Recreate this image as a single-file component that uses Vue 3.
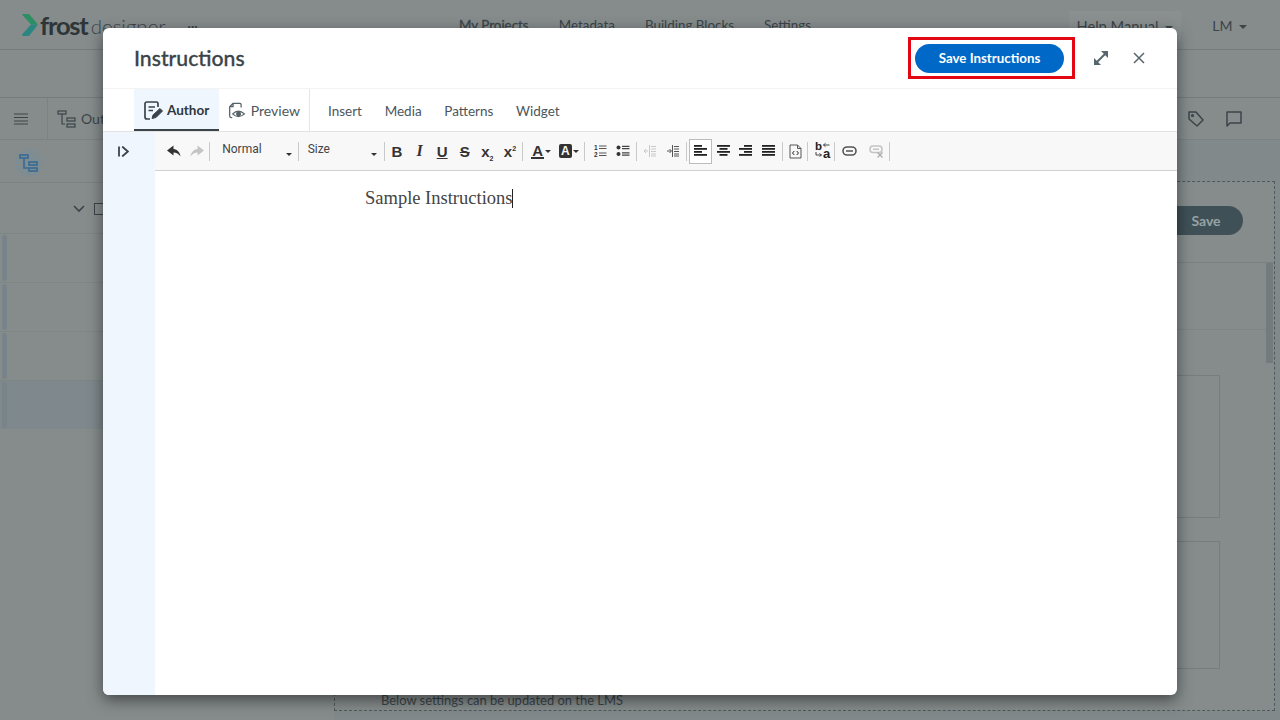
<template>
  <div class="page">
    <!-- page behind the dialog, painted at its dimmed colours -->
    <header class="top-bar">
      <div class="logo">
        <svg width="18" height="24" viewBox="0 0 18 24">
          <path d="M1 1.5Q1 1 1.5 1L8 1L17 11.5L10 11.5Z" fill="#2c8f63" />
          <path d="M10 11.5L17 11.5L8 23L2.5 23Q0.5 23 1.5 21Z" fill="#2b8580" />
        </svg>
        <span class="logo-strong">frost</span>
        <span class="logo-light">designer</span>
        <span class="logo-dots">...</span>
      </div>
      <nav class="top-nav">
        <span class="active">My Projects</span>
        <span>Metadata</span>
        <span>Building Blocks</span>
        <span>Settings</span>
      </nav>
      <div class="top-right">
        <span class="help">Help Manual <i class="caret"></i></span>
        <span class="user">LM <i class="caret"></i></span>
      </div>
    </header>
    <div class="sub-bar"></div>
    <div class="tool-bar">
      <div class="menu-cell">
        <svg width="16" height="12" viewBox="0 0 16 12"><path d="M1 1H15M1 4.5H15M1 8H15M1 11H15" stroke="#3b4449" stroke-width="1.2" /></svg>
      </div>
      <div class="outline-cell">
        <svg width="20" height="20" viewBox="0 0 20 20" fill="none" stroke="#3b4449" stroke-width="1.2">
          <rect x="1" y="2" width="8" height="3" /><path d="M5 5V15H8" /><rect x="10" y="9" width="8" height="3" /><rect x="10" y="15" width="8" height="3" />
        </svg>
        <span>Outline</span>
      </div>
      <div class="tool-right">
        <svg width="20" height="20" viewBox="0 0 20 20" fill="none" stroke="#3b4449" stroke-width="1.5">
          <path d="M3 3H10L17 11L11 17L3 10Z" stroke-linejoin="round" /><circle cx="6.5" cy="6.5" r=".8" />
        </svg>
        <svg width="18" height="18" viewBox="0 0 18 18" fill="none" stroke="#3b4449" stroke-width="1.5">
          <path d="M2 2H16V13H5L2 16Z" stroke-linejoin="round" />
        </svg>
      </div>
    </div>
    <div class="workspace">
      <aside class="left-panel">
        <div class="panel-tabs">
          <span class="tree-btn">
            <svg width="20" height="20" viewBox="0 0 20 20" fill="none" stroke="#3a6c94" stroke-width="1.7">
              <rect x="1" y="2" width="8" height="3" /><path d="M5 5V15H9" /><rect x="10" y="9" width="8" height="3" /><rect x="10" y="15" width="8" height="3" />
            </svg>
          </span>
        </div>
        <div class="tree-head">
          <svg width="12" height="8" viewBox="0 0 12 8" fill="none" stroke="#3b4449" stroke-width="1.6"><path d="M1 1L6 6L11 1" /></svg>
          <span class="tree-box"></span>
        </div>
        <div class="tree-row" v-for="n in 4" :key="n" :class="{ current: n === 4 }"><span class="handle"></span></div>
      </aside>
      <main class="right-panel">
        <div class="dashed">
          <div class="save-row"><span class="save-pill">Save</span></div>
          <div class="scroll-area">
            <div class="band"></div>
            <div class="content-box first"></div>
            <div class="content-box second"></div>
            <p class="lms-note">Below settings can be updated on the LMS</p>
            <span class="scroll-thumb"></span>
          </div>
        </div>
      </main>
    </div>

    <div class="overlay">
      <section class="modal">
        <div class="modal-head">
          <h1>Instructions</h1>
          <div class="highlight"><button class="save-btn">Save Instructions</button></div>
          <svg class="expand" width="18" height="18" viewBox="0 0 18 18" fill="none" stroke="#56666c" stroke-width="2">
            <path d="M3.5 14.5L14.5 3.5" />
            <path d="M9 2H16V9Z" fill="#56666c" stroke="none" />
            <path d="M2 9V16H9Z" fill="#56666c" stroke="none" />
          </svg>
          <svg class="close" width="12" height="12" viewBox="0 0 12 12" fill="none" stroke="#56666c" stroke-width="1.5"><path d="M1 1L11 11M11 1L1 11" /></svg>
        </div>

        <div class="modal-tabs">
          <div class="mode-tab on">
            <svg width="21" height="21" viewBox="0 0 21 21" fill="none" stroke="#3a4449" stroke-width="1.7">
              <path d="M15 7V3.5Q15 2 13.5 2H4Q2 2 2 4V17Q2 19 4 19H7" />
              <path d="M5.5 7H12M5.5 10.5H10" />
              <path d="M9 18.5L10 15L17 8.5L19.5 11L13 17.5Z" fill="#3a4449" stroke-width="1" />
            </svg>
            <span>Author</span>
          </div>
          <div class="mode-tab">
            <svg width="21" height="21" viewBox="0 0 21 21" fill="none" stroke="#566267" stroke-width="1.5">
              <path d="M6 2H14Q15.5 2 15.5 3.5V7M6 2L2 6V17Q2 19 4 19H5M6 2V6H2" />
              <path d="M5.5 14.5Q12 8 19.5 14.5Q12 21 5.5 14.5Z" />
              <circle cx="12.5" cy="14.5" r="2.2" fill="#566267" />
            </svg>
            <span>Preview</span>
          </div>
          <div class="text-tabs">
            <span>Insert</span>
            <span>Media</span>
            <span>Patterns</span>
            <span>Widget</span>
          </div>
        </div>

        <div class="modal-body">
          <div class="side-strip">
            <svg width="11" height="11" viewBox="0 0 11 11" fill="none" stroke="#3a4449" stroke-width="1.8"><path d="M1 0.5V10.5M4.2 0.5L9.8 5.5L4.2 10.5" /></svg>
          </div>
          <div class="editor">
            <div class="cke-bar">
              <button class="tb"><svg width="16" height="14" viewBox="0 0 16 14"><path d="M7.5 1.5L1 6.5L7.5 11.5V8.5C10.5 8.5 12.5 9.8 14.5 12.5C14 8.5 11.5 5.5 7.5 5Z" fill="#333" /></svg></button>
              <button class="tb"><svg width="16" height="14" viewBox="0 0 16 14"><path d="M8.5 1.5L15 6.5L8.5 11.5V8.5C5.5 8.5 3.5 9.8 1.5 12.5C2 8.5 4.5 5.5 8.5 5Z" fill="#c4c4c4" /></svg></button>
              <i class="sep"></i>
              <div class="combo normal"><span>Normal</span><i class="mini-caret"></i></div>
              <i class="sep"></i>
              <div class="combo size"><span>Size</span><i class="mini-caret"></i></div>
              <i class="sep"></i>
              <button class="tb glyph bold">B</button>
              <button class="tb glyph ital">I</button>
              <button class="tb glyph under">U</button>
              <button class="tb glyph strike">S</button>
              <button class="tb glyph script"><span>x<sub>2</sub></span></button>
              <button class="tb glyph script"><span>x<sup>2</sup></span></button>
              <i class="sep"></i>
              <button class="tb wide glyph color-a"><span>A</span><i class="mini-caret"></i></button>
              <button class="tb wide glyph bg-a"><span>A</span><i class="mini-caret"></i></button>
              <i class="sep after-color"></i>
              <button class="tb">
                <svg width="13" height="14" viewBox="0 0 13 14">
                  <text x="0" y="6" class="tiny">1</text><text x="0" y="13" class="tiny">2</text>
                  <path d="M5 2H12.5M5 4.5H12.5M5 9H12.5M5 11.5H12.5" stroke="#555" stroke-width="1.2" />
                </svg>
              </button>
              <button class="tb">
                <svg width="14" height="14" viewBox="0 0 14 14">
                  <circle cx="2.5" cy="3.5" r="2" fill="#333" /><circle cx="2.5" cy="10" r="2" fill="#333" />
                  <path d="M6 2.3H13.5M6 4.7H13.5M6 8.8H13.5M6 11.2H13.5" stroke="#444" stroke-width="1.2" />
                </svg>
              </button>
              <i class="sep roomy"></i>
              <button class="tb">
                <svg width="14" height="14" viewBox="0 0 14 14" fill="none" stroke="#c9c9c9" stroke-width="1">
                  <path d="M6.5 1V13M8 2.5H13M8 5H13M8 7.5H13M8 10H13M8 12H13M1 7H5M3 5L1 7L3 9" />
                </svg>
              </button>
              <button class="tb">
                <svg width="14" height="14" viewBox="0 0 14 14" fill="none" stroke="#555" stroke-width="1">
                  <path d="M6.5 1V13M8 2.5H13M8 5H13M8 7.5H13M8 10H13M8 12H13M1 7H5M3.5 5L5.5 7L3.5 9" />
                </svg>
              </button>
              <i class="sep roomy"></i>
              <button v-for="a in aligns" :key="a.name" class="tb" :class="{ pressed: a.name === 'left' }">
                <svg width="13" height="12" viewBox="0 0 13 12">
                  <rect v-for="(l, i) in a.lines" :key="i" :x="l[0]" :y="i * 3" :width="l[1]" height="1.8" fill="#222" />
                </svg>
              </button>
              <i class="sep roomy"></i>
              <button class="tb">
                <svg width="13" height="15" viewBox="0 0 13 15" fill="none" stroke="#555" stroke-width="1">
                  <path d="M1 1H8.5L12 4.5V14H1ZM8.5 1V4.5H12" />
                  <path d="M5.3 7L3.500 9L5.3 11M7.7 7L9.5 9L7.7 11" stroke="#222" />
                </svg>
              </button>
              <i class="sep after-source"></i>
              <button class="tb">
                <svg class="bidi-icon" width="16" height="20" viewBox="0 0 16 20">
                  <text x="0" y="9" class="bidi">b</text>
                  <text x="8" y="17" class="bidi big">a</text>
                  <path d="M8.5 4H14.5M8.5 4L10.5 2.300M8.5 4L10.500 5.700M1 11V14H6.500M6.500 14L4.500 12.500M6.500 14L4.500 15.500" fill="none" stroke="#444" stroke-width="1" />
                </svg>
              </button>
              <i class="sep"></i>
              <button class="tb link-btn">
                <svg width="15" height="10" viewBox="0 0 15 10" fill="none" stroke="#555" stroke-width="1.6">
                  <rect x="1" y="1" width="13" height="8" rx="4" /><path d="M4 5H11" />
                </svg>
              </button>
              <button class="tb unlink-btn">
                <svg width="15" height="13" viewBox="0 0 15 13" fill="none" stroke="#c4c4c4" stroke-width="1.5">
                  <rect x="1" y="1" width="12" height="6.5" rx="3" /><path d="M4 4.2H10" />
                  <path d="M8.5 7.5L13.5 12.5M13.5 7.5L8.5 12.5" stroke-width="1.2" stroke="#aaa" />
                </svg>
              </button>
              <i class="sep"></i>
            </div>
            <div class="editable">
              <p>Sample Instructions<i class="text-caret"></i></p>
            </div>
          </div>
        </div>
      </section>
    </div>
  </div>
</template>

<script setup>
const aligns = [
  { name: 'left', lines: [[0, 8], [0, 13], [0, 8], [0, 13]] },
  { name: 'center', lines: [[0, 13], [2.5, 8], [0, 13], [2.5, 8]] },
  { name: 'right', lines: [[5, 8], [0, 13], [5, 8], [0, 13]] },
  { name: 'justify', lines: [[0, 13], [0, 13], [0, 13], [0, 13]] }
]
</script>

<style>
html, body {
  margin: 0;
  height: 100%;
  overflow: hidden;
}
</style>

<style scoped>
.page {
  width: 1280px;
  height: 720px;
  position: relative;
  overflow: hidden;
  background: #868c8c;
  color: #3b4449;
  font-family: Lato, "Liberation Sans", sans-serif;
  font-size: 14px;
}

.top-bar {
  height: 49px;
  border-bottom: 1px solid #747b7c;
  display: flex;
  align-items: center;
}
.logo {
  width: 459px;
  padding-left: 21px;
  box-sizing: border-box;
  display: flex;
  align-items: center;
  height: 49px;
}
.logo-strong {
  font-size: 25.5px;
  font-weight: 700;
  letter-spacing: -1.2px;
  margin-left: 1px;
  color: #2d3538;
}
.logo-light {
  font-size: 20.5px;
  font-weight: 300;
  margin-left: 3px;
  padding-top: 2px;
}
.logo-dots {
  margin: 0 0 4px 22px;
  font-weight: 700;
}
.top-nav {
  display: flex;
  gap: 30px;
  font-size: 13.4px;
}
.top-nav .active {
  -webkit-text-stroke: .3px #3b4449;
}
.top-right {
  margin-left: auto;
  display: flex;
  align-items: center;
  padding-right: 33px;
  padding-top: 2px;
}
.help {
  padding: 6px 8px 6px 7px;
  background: #8a9090;
  font-size: 14.7px;
}
.user {
  margin-left: 31px;
}
.caret {
  display: inline-block;
  border: 4px solid transparent;
  border-top-color: #3b4449;
  border-bottom: 0;
  margin-left: 3px;
  vertical-align: 2px;
}

.sub-bar {
  height: 48px;
  border-bottom: 1px solid #757c7d;
  box-sizing: border-box;
}
.tool-bar {
  height: 42px;
  border-bottom: 1px solid #7b8283;
  box-sizing: border-box;
  display: flex;
  align-items: center;
}
.menu-cell {
  width: 48px;
  height: 100%;
  border-right: 1px solid #7b8283;
  display: flex;
  align-items: center;
  justify-content: center;
  padding-right: 5px;
  box-sizing: border-box;
}
.outline-cell {
  display: flex;
  align-items: center;
  gap: 4px;
  padding-left: 9px;
}
.tool-right {
  margin-left: auto;
  display: flex;
  align-items: center;
  gap: 19px;
  padding-right: 37px;
}

.workspace {
  height: 580px;
  display: flex;
}
.left-panel {
  width: 334px;
  flex: none;
}
.panel-tabs {
  height: 43px;
  border-bottom: 1px solid #7b8283;
  box-sizing: border-box;
  padding: 3px 0 0 15px;
  display: flex;
  align-items: center;
}
.tree-btn {
  width: 28px;
  height: 28px;
  border-radius: 50%;
  background: #7f8c92;
  display: flex;
  align-items: center;
  justify-content: center;
}
.tree-head {
  height: 50px;
  padding: 2px 0 0 73px;
  box-sizing: border-box;
  display: flex;
  align-items: center;
  gap: 9px;
}
.tree-box {
  width: 8px;
  height: 10px;
  border: 1.5px solid #3b4449;
}
.tree-row {
  height: 49px;
  border-top: 1px solid #7e8585;
  box-sizing: border-box;
  padding-left: 2px;
}
.tree-row.current {
  background: #7f888c;
}
.handle {
  display: block;
  width: 5px;
  height: 46px;
  border-radius: 3px;
  background: #788489;
  margin-top: 1px;
}

.right-panel {
  flex: 1;
  background: #82898b;
  padding-top: 41px;
  padding-right: 5px;
  padding-bottom: 9px;
  min-width: 0;
}
.dashed {
  height: 100%;
  border: 1px dashed #4e5a5c;
  box-sizing: border-box;
  background: #868c8c;
  display: flex;
  flex-direction: column;
}
.save-row {
  height: 81px;
  flex: none;
  border-bottom: 1px solid #7a8182;
  box-sizing: border-box;
  padding: 24px 31px 0 0;
  display: flex;
  justify-content: flex-end;
}
.save-pill {
  width: 90px;
  height: 29px;
  line-height: 29px;
  text-align: center;
  padding-left: 16px;
  box-sizing: border-box;
  background: #3f5157;
  color: #97a3a5;
  border-radius: 15px;
  font-weight: 700;
  font-size: 14px;
}
.scroll-area {
  flex: 1;
  position: relative;
  padding-left: 46px;
  min-height: 0;
}
.band {
  height: 66px;
  border-bottom: 1px solid #7e8585;
}
.content-box {
  width: 839px;
  border: 1px solid #767d7e;
  box-sizing: border-box;
}
.content-box.first {
  height: 143px;
  margin-top: 45px;
}
.content-box.second {
  height: 128px;
  margin-top: 23px;
}
.lms-note {
  margin: 23px 0 0;
  line-height: 17px;
  font-size: 12.95px;
}
.scroll-thumb {
  position: absolute;
  right: 1px;
  top: 0;
  width: 7px;
  height: 100px;
  background: #747b7c;
}

.overlay {
  position: absolute;
  inset: 0;
  padding: 28px 103px 25px;
  box-sizing: border-box;
  display: flex;
}
.modal {
  flex: 1;
  min-width: 0;
  background: #fff;
  border-radius: 6px;
  box-shadow: 0 5px 15px rgba(0, 0, 0, .5);
  display: flex;
  flex-direction: column;
  overflow: hidden;
}
.modal-head {
  height: 61px;
  flex: none;
  border-bottom: 1px solid #f3f3f3;
  box-sizing: border-box;
  padding-left: 31px;
  display: flex;
  align-items: center;
}
.modal-head h1 {
  margin: 0 auto 1px 0;
  font-size: 21.2px;
  font-weight: 500;
  -webkit-text-stroke: .3px #3a4449;
  color: #3a4449;
}
.highlight {
  border: 3px solid #e30613;
  padding: 4px 8px 3px 4px;
  margin-top: -1px;
}
.save-btn {
  display: block;
  width: 149px;
  height: 29px;
  border: 0;
  border-radius: 15px;
  background: #0069c8;
  color: #fff;
  font: 700 13.3px Lato, "Liberation Sans", sans-serif;
  padding: 0;
}
.expand {
  margin-left: 17px;
}
.close {
  margin: 0 32px 0 23px;
}

.modal-tabs {
  height: 43px;
  flex: none;
  padding-left: 31px;
  border-bottom: 1px solid #e2e2e2;
  box-sizing: border-box;
  display: flex;
  color: #4c565b;
}
.mode-tab {
  display: flex;
  align-items: center;
  gap: 5px;
  padding: 0 9px;
  border-bottom: 2px solid transparent;
  height: 42px;
  box-sizing: border-box;
  width: 85px;
}
.mode-tab + .mode-tab {
  width: 91px;
  border-right: 1px solid #e6e6e6;
  border-bottom: 0;
}
.mode-tab.on {
  background: #eff6fe;
  border-bottom-color: #3a4449;
  color: #2f383c;
  font-weight: 700;
  font-size: 13.5px;
  padding-top: 2px;
  gap: 3px;
}
.text-tabs {
  display: flex;
  align-items: center;
  gap: 22.7px;
  padding: 1px 0 0 18px;
  font-size: 13.5px;
}

.modal-body {
  flex: 1;
  min-height: 0;
  display: flex;
}
.side-strip {
  width: 52px;
  flex: none;
  background: #eff6fe;
  display: flex;
  justify-content: center;
  align-items: flex-start;
  padding: 14px 11px 0 0;
  box-sizing: border-box;
}
.editor {
  flex: 1;
  min-width: 0;
  display: flex;
  flex-direction: column;
}
.cke-bar {
  height: 39px;
  flex: none;
  box-sizing: border-box;
  background: #f8f8f8;
  border-bottom: 1px solid #d1d1d1;
  padding-left: 8px;
  display: flex;
  align-items: center;
}
.tb {
  width: 22.6px;
  height: 25px;
  padding: 0;
  flex: none;
  border: 1px solid transparent;
  background: none;
  display: flex;
  align-items: center;
  justify-content: center;
  color: #333;
  box-sizing: border-box;
}
.tb.wide {
  width: 29px;
  gap: 1px;
}
.tb.pressed {
  background: #fff;
  border-color: #bcbcbc;
}
.link-btn {
  margin-left: 3px;
}
.unlink-btn {
  margin-left: 4px;
  width: 23px;
}
.bidi-icon {
  flex: none;
  margin-left: 3px;
}
.sep {
  width: 1px;
  height: 19px;
  flex: none;
  background: #c9c9c9;
  margin: 0 1px;
}
.sep.after-color {
  margin-right: 4px;
}
.sep.roomy {
  margin: 0 2px;
}
.sep.after-source {
  margin: 0 2px 0 0;
}
.combo {
  height: 25px;
  display: flex;
  align-items: flex-start;
  justify-content: space-between;
  font: 12px Roboto, "Liberation Sans", sans-serif;
  color: #444;
  box-sizing: border-box;
  flex: none;
  padding-top: 3px;
}
.combo.normal {
  width: 85.5px;
  padding-left: 11px;
  padding-right: 5px;
}
.combo.size {
  width: 83px;
  padding-left: 8px;
  padding-right: 6px;
}
.mini-caret {
  width: 0;
  height: 0;
  border: 3px solid transparent;
  border-top-color: #333;
  border-bottom: 0;
  align-self: center;
  flex: none;
}
.combo .mini-caret {
  margin-top: 4px;
}
.glyph {
  font-family: "Liberation Sans", sans-serif;
  font-size: 15px;
  line-height: 1;
}
.bold {
  font-weight: 700;
}
.ital {
  font-family: "Liberation Serif", serif;
  font-style: italic;
  font-weight: 700;
  font-size: 16px;
}
.under {
  font-weight: 700;
  text-decoration: underline;
}
.strike {
  font-weight: 700;
  text-decoration: line-through;
}
.script {
  font-weight: 700;
  font-size: 15px;
}
.script sub, .script sup {
  font-size: 7px;
  line-height: 0;
}
.color-a {
  margin-left: 2.5px;
}
.color-a span {
  font-weight: 700;
  border-bottom: 2px solid #333;
  line-height: 13px;
  padding: 0 1px;
}
.tb.wide.bg-a {
  margin-left: -1px;
  width: 28px;
}
.bg-a span {
  font-weight: 700;
  font-size: 12px;
  background: #333;
  color: #f8f8f8;
  border-radius: 2px;
  line-height: 14px;
  padding: 0 2px;
}
.tiny {
  font: 700 6.5px "Liberation Sans", sans-serif;
  fill: #333;
}
.bidi {
  font: 700 11.5px "Liberation Sans", sans-serif;
  fill: #222;
}
.bidi.big {
  font-size: 13px;
}

.editable {
  flex: 1;
  padding: 17px 0 0 210px;
  font-family: "Liberation Serif", serif;
  font-size: 18.5px;
  color: #444;
}
.editable p {
  margin: 0;
  line-height: 19px;
  position: relative;
  display: inline-block;
}
.text-caret {
  position: absolute;
  right: -1px;
  top: 0;
  width: 1px;
  height: 19px;
  background: #222;
}
</style>
